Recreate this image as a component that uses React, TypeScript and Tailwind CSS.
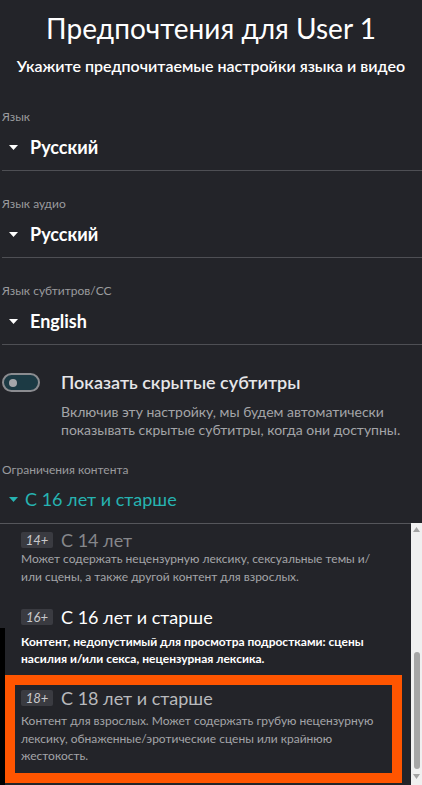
import React from 'react';

function Caret({ className }: { className?: string }) {
  return (
    <svg width="9" height="5" viewBox="0 0 9 5" className={className}>
      <path d="M0 0 H9 L4.5 5 Z" fill="currentColor" />
    </svg>
  );
}

function Select({ label, value, last }: { label: string; value: string; last?: boolean }) {
  return (
    <div className={last ? '' : 'pt-[25px]'}>
      <p className="text-[12px] leading-4 text-[#9a9b9e]">{label}</p>
      <div className="mt-[10px] flex h-6 items-center">
        <Caret className="ml-[7px] text-white" />
        <span className="ml-[12px] text-[18px] font-bold leading-6 text-white">{value}</span>
      </div>
      <div className="mt-[11px] h-px bg-[#4e4f54]" />
    </div>
  );
}

function Badge({ children }: { children: React.ReactNode }) {
  return (
    <span className="flex h-[16px] w-[32px] shrink-0 items-center justify-center rounded-[2px] bg-[#3a3b41] text-[13px] italic leading-none text-[#c9c9cc]">
      {children}
    </span>
  );
}

export default function App() {
  return (
    <div
      className="relative h-[785px] w-[422px] overflow-hidden bg-[#232429] text-white"
      style={{ fontFamily: 'Lato, "Noto Sans", sans-serif' }}
    >
      <div className="pt-[10px] text-center">
        <h1 className="text-[28px] leading-9 text-white">Предпочтения для User 1</h1>
        <p className="mt-[9px] text-[16px] font-semibold leading-[22px] text-white">
          Укажите предпочитаемые настройки языка и видео
        </p>
      </div>

      <div className="mt-[32px] pl-[2px]">
        <Select label="Язык" value="Русский" last />
        <Select label="Язык аудио" value="Русский" />
        <Select label="Язык субтитров/CC" value="English" />
      </div>

      <div className="mt-[25px] flex items-start">
        <div className="ml-[2px] mt-[3px] flex h-[19px] w-[38px] shrink-0 items-center rounded-full border-2 border-[#8b8c90] bg-[#1c3a44]">
          <span className="ml-[5px] h-[8px] w-[8px] rounded-full bg-[#a5a6aa]" />
        </div>
        <div className="ml-[21px]">
          <p className="text-[18px] font-semibold leading-6 text-[#e6e6e8]">Показать скрытые субтитры</p>
          <p className="mt-[9px] text-[14px] leading-[18px] text-[#a3a4a8]">
            Включив эту настройку, мы будем автоматически показывать скрытые субтитры, когда они доступны.
          </p>
        </div>
      </div>

      <div className="mt-[23px] pl-[2px]">
        <p className="text-[12px] leading-4 text-[#9a9b9e]">Ограничения контента</p>
        <div className="mt-[9px] flex h-6 items-center">
          <Caret className="ml-[7px] text-[#26b3b1]" />
          <span className="ml-[7px] text-[18px] leading-6 text-[#26b3b1]">С 16 лет и старше</span>
        </div>
      </div>

      <div className="mt-[12px] mr-[11px] h-px bg-[#55565b]" />

      <div className="absolute bottom-0 right-0 top-[523px] flex w-[11px] flex-col items-center bg-[#f0f0f0]">
        <svg width="7" height="5" viewBox="0 0 7 5" className="mt-[4px]">
          <path d="M0 5 L3.5 0 L7 5 Z" fill="#a3a3a3" />
        </svg>
        <div className="mt-[120px] h-[117px] w-[6px] rounded-full bg-[#a6a6a6]" />
        <svg width="7" height="5" viewBox="0 0 7 5" className="mt-[5px]">
          <path d="M0 0 H7 L3.5 5 Z" fill="#a3a3a3" />
        </svg>
      </div>

      <div className="mr-[11px]">
        <div className="pl-[21px] pr-[26px]">
          <div className="mt-[5px] flex h-[22px] items-center">
            <Badge>14+</Badge>
            <span className="ml-[8px] text-[18px] leading-[22px] text-[#86878b]">С 14 лет</span>
          </div>
          <p className="mt-[-1px] text-[12px] leading-[18px] text-[#a3a4a8]">
            Может содержать нецензурную лексику, сексуальные темы и/или сцены, а также другой контент для взрослых.
          </p>
          <div className="mt-[20px] flex h-[22px] items-center">
            <Badge>16+</Badge>
            <span className="ml-[8px] text-[18px] leading-[22px] text-white">С 16 лет и старше</span>
          </div>
        </div>
        <div className="border-l-[5px] border-black bg-[#232429] pb-[10px]">
          <p className="pl-[16px] pr-[26px] pt-[5px] text-[12px] font-bold leading-[17px] text-white">
            Контент, недопустимый для просмотра подростками: сцены насилия и/или секса, нецензурная лексика.
          </p>
          <div className="mr-[9px] mt-[8px] border-[10px] border-[#ff5500] pb-[8px] pl-[6px] pr-[4px] pt-[2px]">
            <div className="flex h-[22px] items-center">
              <Badge>18+</Badge>
              <span className="ml-[8px] text-[18px] leading-[22px] text-[#b8b9bc]">С 18 лет и старше</span>
            </div>
            <p className="mt-[3px] text-[12px] leading-[17.5px] text-[#a3a4a8]">
              Контент для взрослых. Может содержать грубую нецензурную лексику, обнаженные/эротические сцены или крайнюю жестокость.
            </p>
          </div>
        </div>
      </div>
    </div>
  );
}
